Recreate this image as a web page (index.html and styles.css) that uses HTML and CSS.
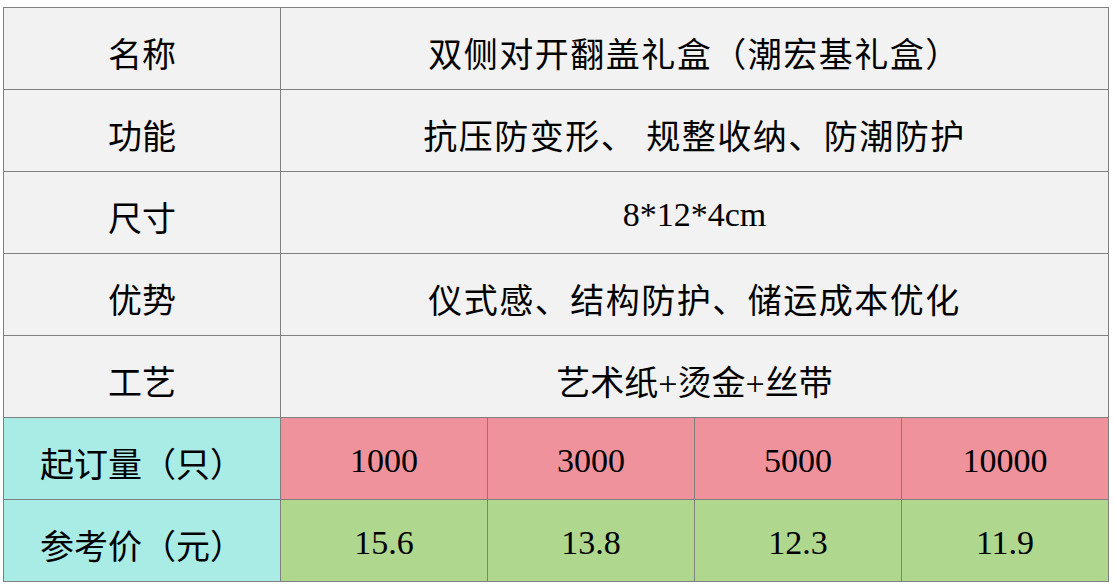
FILE: index.html
```html
<!DOCTYPE html>
<html lang="zh">
<head>
<meta charset="utf-8">
<link rel="stylesheet" href="styles.css">
</head>
<body>
<table class="spec">
  <colgroup>
    <col class="c-label">
    <col class="c-val"><col class="c-val"><col class="c-val"><col class="c-val">
  </colgroup>
  <tr><td class="label">名称</td><td colspan="4" class="wide">双侧对开翻盖礼盒（潮宏基礼盒）</td></tr>
  <tr><td class="label">功能</td><td colspan="4" class="wide">抗压防变形、 规整收纳、防潮防护</td></tr>
  <tr><td class="label">尺寸</td><td colspan="4" class="num">8*12*4cm</td></tr>
  <tr><td class="label">优势</td><td colspan="4" class="wide">仪式感、结构防护、储运成本优化</td></tr>
  <tr><td class="label">工艺</td><td colspan="4">艺术纸+烫金+丝带</td></tr>
  <tr class="qty"><td class="label cyan">起订量（只）</td><td class="num">1000</td><td class="num">3000</td><td class="num">5000</td><td class="num">10000</td></tr>
  <tr class="price"><td class="label cyan">参考价（元）</td><td class="num">15.6</td><td class="num">13.8</td><td class="num">12.3</td><td class="num">11.9</td></tr>
</table>
</body>
</html>
```
FILE: styles.css
```css
html, body { margin: 0; padding: 0; background: #ffffff; }
body { padding: 7px 0 0 3px; }
.spec {
  border-collapse: collapse;
  table-layout: fixed;
  width: 1106px;
  font-family: "Liberation Serif", "Noto Sans CJK SC", serif;
  font-size: 34px;
  color: #000;
}
.c-label { width: 277px; }
.c-val { width: 207px; }
.spec td {
  border: 1px solid #808080;
  background: #f2f2f2;
  height: 82px;
  padding: 14px 0 0 0;
  box-sizing: border-box;
  text-align: center;
  vertical-align: middle;
  line-height: 1;
  white-space: nowrap;
}
.spec td.wide { letter-spacing: 1.5px; }
.spec td.num { padding-top: 4px; }
.spec td.cyan { background: #a9ebe5; }
.qty td { background: #f0929b; }
.price td { background: #afd78e; }
```
